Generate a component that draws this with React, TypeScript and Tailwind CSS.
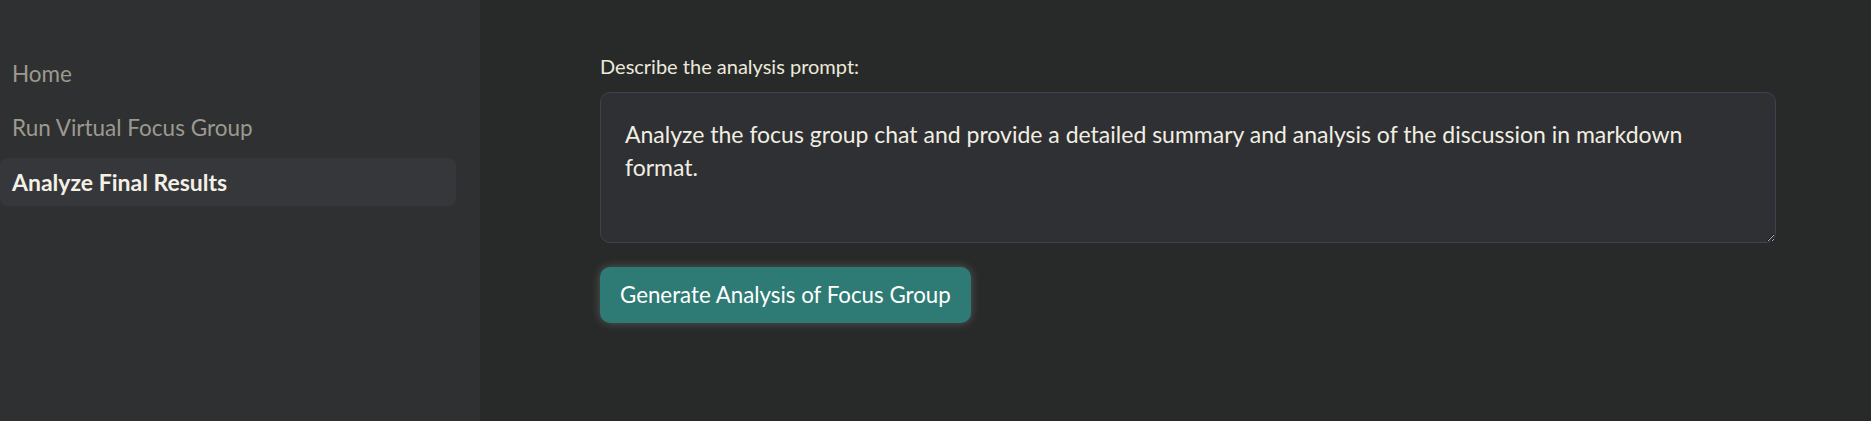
import { useState } from "react";

const NAV = ["Home", "Run Virtual Focus Group", "Analyze Final Results"];

const PROMPT =
  "Analyze the focus group chat and provide a detailed summary and analysis of the discussion in markdown format.";

function Sidebar({ active }: { active: string }) {
  return (
    <aside className="w-[480px] shrink-0 bg-[#2f3032] pt-[50px] pr-[24px]">
      <nav className="flex flex-col gap-[6px]">
        {NAV.map((item) => (
          <div
            key={item}
            className={
              item === active
                ? "flex h-[48px] items-center rounded-[8px] bg-[#36373b] pl-[12px] text-[23px] font-bold text-[#f3f1e6]"
                : "flex h-[48px] items-center pl-[12px] text-[22.5px] text-[#9c9a8f]"
            }
          >
            {item}
          </div>
        ))}
      </nav>
    </aside>
  );
}

export default function App() {
  const [prompt, setPrompt] = useState(PROMPT);

  return (
    <div className="flex h-[421px] w-full bg-[#282a29] font-['Lato',_sans-serif]">
      <Sidebar active="Analyze Final Results" />
      <main className="flex-1 pl-[120px] pr-[95px] pt-[52px]">
        <label
          htmlFor="prompt"
          className="block text-[20px] leading-[29px] text-[#ece9dc]"
        >
          Describe the analysis prompt:
        </label>
        <textarea
          id="prompt"
          value={prompt}
          onChange={(e) => setPrompt(e.target.value)}
          className="mt-[11px] block h-[151px] w-full resize-y rounded-[10px] border border-[#3f4252] bg-[#2f3033] px-[24px] pt-[25px] pb-[21px] text-[23px] leading-[33px] text-[#f1eee2] outline-none"
        />
        <button className="mt-[24px] h-[56px] rounded-[10px] bg-[#2e7a74] px-[20px] text-[22.3px] text-white shadow-[0_0_10px_rgba(200,200,200,0.3)]">
          Generate Analysis of Focus Group
        </button>
      </main>
    </div>
  );
}
